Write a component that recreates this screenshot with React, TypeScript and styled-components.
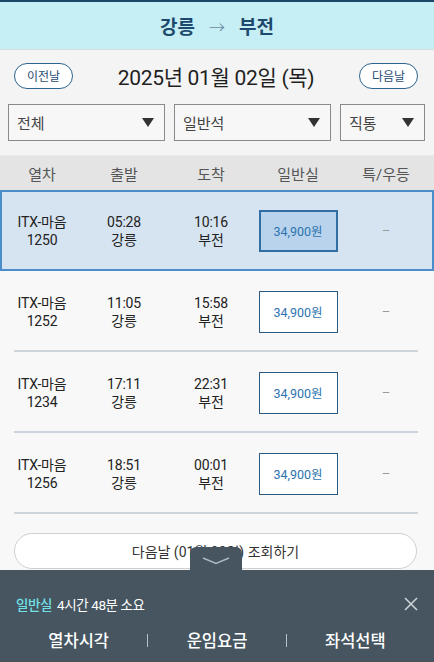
import React from "react";
import styled, { createGlobalStyle } from "styled-components";

const GlobalStyle = createGlobalStyle`
  html, body { margin: 0; padding: 0; }
  body {
    width: 434px;
    height: 662px;
    overflow: hidden;
    background: #f8f8f8;
    font-family: Roboto, "Noto Sans CJK KR", "Noto Sans", sans-serif;
    color: #222;
  }
  * { box-sizing: border-box; }
`;

const Page = styled.div`
  width: 434px;
  height: 662px;
  display: flex;
  flex-direction: column;
  position: relative;
  background: #f8f8f8;
`;

const TopBar = styled.header`
  height: 50px;
  border-top: 2px solid #1b4766;
  border-bottom: 1px solid #d8dcdd;
  background: #c6eef5;
  display: flex;
  align-items: center;
  justify-content: center;
  gap: 14px;
  font-size: 19px;
  font-weight: 700;
  color: #1d4a6c;
`;

const Arrow = styled.span`
  font-weight: 300;
  color: #6a8aa0;
  font-size: 16px;
`;

const FilterArea = styled.section`
  background: #f4f4f4;
  padding: 0 9px 14px 8px;
  border-bottom: 1px solid #e9e9e9;
`;

const DateRow = styled.div`
  height: 51px;
  display: flex;
  align-items: center;
  justify-content: space-between;
  padding: 0 7px 0 6px;
`;

const DayButton = styled.button`
  width: 59px;
  height: 26px;
  border-radius: 13px;
  border: 1.5px solid #2c6590;
  background: #fff;
  color: #1f4d72;
  font-family: inherit;
  font-size: 12px;
  padding: 0;
  display: flex;
  align-items: center;
  justify-content: center;
`;

const DateText = styled.div`
  font-size: 21px;
  color: #1f1f1f;
  letter-spacing: -0.3px;
`;

const SelectRow = styled.div`
  display: grid;
  grid-template-columns: 157px 157px 85px;
  gap: 9px;
  margin-top: 3px;
`;

const SelectBox = styled.div`
  height: 37px;
  border: 1px solid #8a8a8a;
  background: #f7f7f7;
  display: flex;
  align-items: center;
  justify-content: space-between;
  padding: 0 10px 0 8px;
  font-size: 15px;
  color: #444;
`;

const Caret = styled.span`
  width: 0;
  height: 0;
  border-left: 6px solid transparent;
  border-right: 6px solid transparent;
  border-top: 9px solid #333;
`;

const cols = "84px 80px 94px 80px 1fr";

const TableHead = styled.div`
  height: 34px;
  display: grid;
  grid-template-columns: ${cols};
  align-items: center;
  background: #e4e4e4;
  font-size: 15px;
  color: #555;
  text-align: center;
`;

const TrainRow = styled.div<{ $selected?: boolean }>`
  height: 81px;
  display: grid;
  grid-template-columns: ${cols};
  align-items: center;
  text-align: center;
  position: relative;
  background: ${(p) => (p.$selected ? "#d6e4f1" : "transparent")};
  box-shadow: ${(p) => (p.$selected ? "inset 0 0 0 2px #4b8dc8" : "none")};
  ${(p) =>
    !p.$selected &&
    `
    &::after {
      content: "";
      position: absolute;
      left: 14px;
      right: 16px;
      bottom: 0;
      height: 2px;
      background: #cdd4db;
    }
  `}
`;

const Cell = styled.div`
  font-size: 14px;
  line-height: 18px;
  letter-spacing: -0.2px;
  color: #222;
`;

const PriceBox = styled.div<{ $selected?: boolean }>`
  justify-self: center;
  width: 79px;
  height: 42px;
  display: flex;
  align-items: center;
  justify-content: center;
  font-size: 12.5px;
  color: #2e73b0;
  background: ${(p) => (p.$selected ? "#b8d3eb" : "#fff")};
  border: ${(p) => (p.$selected ? "2px solid #2f6fa6" : "1.5px solid #2b5a82")};
`;

const Dash = styled.div`
  color: #9a9a9a;
  font-size: 13px;
`;

const MoreWrap = styled.div`
  padding: 19px 17px 0 14px;
`;

const MoreButton = styled.button`
  width: 100%;
  height: 36px;
  border-radius: 18px;
  border: 1px solid #cfcfcf;
  background: #fff;
  font-family: inherit;
  font-size: 14px;
  color: #333;
  padding: 0;
`;

const BottomPanel = styled.footer`
  position: absolute;
  left: 0;
  right: 0;
  bottom: 0;
  height: 92px;
  background: #46555f;
  padding: 24px 0 0 16px;
  color: #fff;
`;

const PullTab = styled.div`
  position: absolute;
  left: 190px;
  top: -23px;
  width: 52px;
  height: 24px;
  background: #46555f;
  border-radius: 6px 6px 0 0;
  display: flex;
  justify-content: center;
  padding-top: 10px;
`;

const InfoLine = styled.div`
  display: flex;
  align-items: center;
  justify-content: space-between;
  padding-right: 16px;
  font-size: 13.5px;
  letter-spacing: -0.4px;
  height: 20px;
`;

const Accent = styled.span`
  color: #71e0e8;
  font-weight: 500;
  margin-right: 5px;
`;

const Tabs = styled.nav`
  display: grid;
  grid-template-columns: 1fr auto 1fr auto 1fr;
  align-items: center;
  margin: 14px 10px 0 -6px;
`;

const TabLabel = styled.div`
  text-align: center;
  font-size: 16.5px;
  font-weight: 500;
  color: #fff;
`;

const TabSep = styled.div`
  width: 1px;
  height: 13px;
  background: #b9c0c5;
`;

const trains = [
  { name: "ITX-마음", no: "1250", dep: "05:28", arr: "10:16" },
  { name: "ITX-마음", no: "1252", dep: "11:05", arr: "15:58" },
  { name: "ITX-마음", no: "1234", dep: "17:11", arr: "22:31" },
  { name: "ITX-마음", no: "1256", dep: "18:51", arr: "00:01" },
];

export default function App() {
  return (
    <>
      <GlobalStyle />
      <Page>
        <TopBar>
          <span>강릉</span>
          <Arrow>→</Arrow>
          <span>부전</span>
        </TopBar>
        <FilterArea>
          <DateRow>
            <DayButton>이전날</DayButton>
            <DateText>2025년 01월 02일 (목)</DateText>
            <DayButton>다음날</DayButton>
          </DateRow>
          <SelectRow>
            <SelectBox>
              전체
              <Caret />
            </SelectBox>
            <SelectBox>
              일반석
              <Caret />
            </SelectBox>
            <SelectBox>
              직통
              <Caret />
            </SelectBox>
          </SelectRow>
        </FilterArea>
        <TableHead>
          <div>열차</div>
          <div>출발</div>
          <div>도착</div>
          <div>일반실</div>
          <div>특/우등</div>
        </TableHead>
        {trains.map((t, i) => (
          <TrainRow key={t.no} $selected={i === 0}>
            <Cell>
              {t.name}
              <br />
              {t.no}
            </Cell>
            <Cell>
              {t.dep}
              <br />
              강릉
            </Cell>
            <Cell>
              {t.arr}
              <br />
              부전
            </Cell>
            <PriceBox $selected={i === 0}>34,900원</PriceBox>
            <Dash>–</Dash>
          </TrainRow>
        ))}
        <MoreWrap>
          <MoreButton>다음날 (01월 03일) 조회하기</MoreButton>
        </MoreWrap>
        <BottomPanel>
          <PullTab>
            <svg width="28" height="8" viewBox="0 0 28 8">
              <polyline points="1,1 14,6.5 27,1" fill="none" stroke="#aeb8bf" strokeWidth="1.5" />
            </svg>
          </PullTab>
          <InfoLine>
            <span>
              <Accent>일반실</Accent>4시간 48분 소요
            </span>
            <svg width="14" height="14" viewBox="0 0 14 14">
              <path d="M1 1 L13 13 M13 1 L1 13" stroke="#d0d5d8" strokeWidth="1.5" />
            </svg>
          </InfoLine>
          <Tabs>
            <TabLabel>열차시각</TabLabel>
            <TabSep />
            <TabLabel>운임요금</TabLabel>
            <TabSep />
            <TabLabel>좌석선택</TabLabel>
          </Tabs>
        </BottomPanel>
      </Page>
    </>
  );
}
